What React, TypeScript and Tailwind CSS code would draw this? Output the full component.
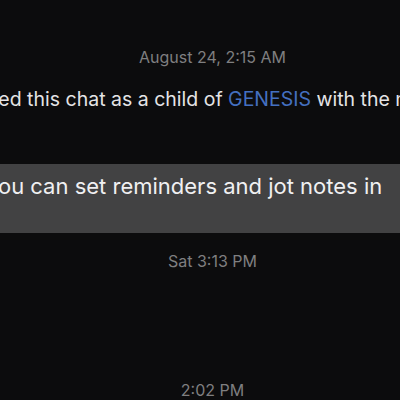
export default function App() {
  return (
    <div className="w-[400px] h-[400px] overflow-hidden bg-[#0c0c0d] font-['Inter','Liberation_Sans',sans-serif]">
      <div className="w-[425px] flex flex-col">
        {/* first timestamp */}
        <div className="pt-[45px] text-center text-[16px] leading-[24px] text-[#7f7f80]">
          August 24, 2:15 AM
        </div>

        {/* system notice */}
        <div className="mt-[17px] ml-[-89px] whitespace-nowrap text-[19.5px] leading-[26px] text-[#e4e4e6]">
          You created this chat as a child of <span className="text-[#4470c0]">GENESIS</span> with the name
        </div>

        {/* message bubble */}
        <div className="mt-[52px] ml-[-30px] w-[470px] h-[69px] bg-[#424243] pl-[16px] pt-[8px] whitespace-nowrap text-[22px] leading-[28px] text-[#f0f0f2]">
          you can set reminders and jot notes in
        </div>

        <div className="mt-[16px] text-center text-[16px] leading-[24px] text-[#7f7f80]">
          Sat 3:13 PM
        </div>

        <div className="mt-[105px] text-center text-[16px] leading-[24px] text-[#7f7f80]">
          2:02 PM
        </div>
      </div>
    </div>
  );
}
